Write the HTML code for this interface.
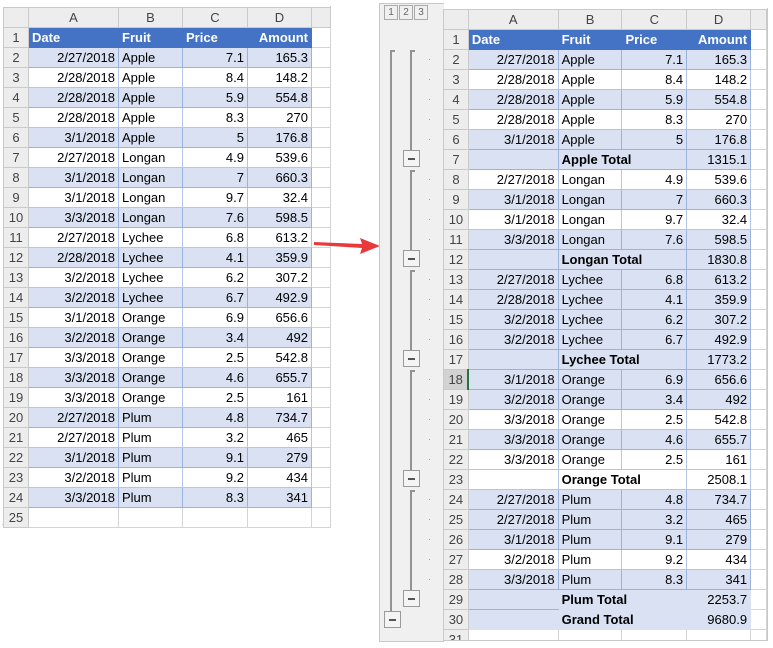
<!DOCTYPE html>
<html><head><meta charset="utf-8">
<style>
body{margin:0;width:773px;height:648px;background:#fff;position:relative;overflow:hidden;font-family:"Liberation Sans",sans-serif;font-size:13px;color:#000}
table{border-collapse:collapse;table-layout:fixed;position:absolute}
td{height:19px;padding:0 3px;border:1px solid #d4d4d4;white-space:nowrap;overflow:hidden;line-height:19px}
td.h{background:#ededed;color:#444;text-align:center;border-color:#cacaca;padding:0}
tr.t1 td:not(.h):not(.x){background:#4472c4;color:#fff;font-weight:bold;border-color:#4472c4}
tr.b td:not(.h):not(.x){background:#d9e1f2;border-color:#9bb2dd}
tr.w td:not(.h):not(.x){background:#fff;border-color:#b4c6e7}
td.r{text-align:right}
td.x{background:#fff}
.bold{font-weight:bold}
.o{position:absolute;background:#939393}
.mb{position:absolute;width:17px;height:17px;border:1px solid #9a9a9a;background:#f4f4f4;box-sizing:border-box}
.mb:after{content:"";position:absolute;left:4px;top:7px;width:7px;height:2px;background:#555}
.dot{position:absolute;width:1px;height:1px;background:#999}
</style></head><body>

<div style="position:absolute;left:2px;top:6px;width:328px;height:518px;border:1px solid #c8c8c8;border-top:none;border-left:none"></div>
<table style="left:3px;top:7px">
<colgroup><col style="width:25px"><col style="width:90px"><col style="width:64px"><col style="width:65px"><col style="width:64px"><col style="width:19px"></colgroup>
<tr class="hd"><td class="h"></td><td class="h">A</td><td class="h">B</td><td class="h">C</td><td class="h">D</td><td class="h"></td></tr>
<tr class="t1"><td class="h">1</td><td>Date</td><td>Fruit</td><td>Price</td><td class="r">Amount</td><td class="x"></td></tr>
<tr class="b"><td class="h">2</td><td class="r">2/27/2018</td><td>Apple</td><td class="r">7.1</td><td class="r">165.3</td><td class="x"></td></tr>
<tr class="w"><td class="h">3</td><td class="r">2/28/2018</td><td>Apple</td><td class="r">8.4</td><td class="r">148.2</td><td class="x"></td></tr>
<tr class="b"><td class="h">4</td><td class="r">2/28/2018</td><td>Apple</td><td class="r">5.9</td><td class="r">554.8</td><td class="x"></td></tr>
<tr class="w"><td class="h">5</td><td class="r">2/28/2018</td><td>Apple</td><td class="r">8.3</td><td class="r">270</td><td class="x"></td></tr>
<tr class="b"><td class="h">6</td><td class="r">3/1/2018</td><td>Apple</td><td class="r">5</td><td class="r">176.8</td><td class="x"></td></tr>
<tr class="w"><td class="h">7</td><td class="r">2/27/2018</td><td>Longan</td><td class="r">4.9</td><td class="r">539.6</td><td class="x"></td></tr>
<tr class="b"><td class="h">8</td><td class="r">3/1/2018</td><td>Longan</td><td class="r">7</td><td class="r">660.3</td><td class="x"></td></tr>
<tr class="w"><td class="h">9</td><td class="r">3/1/2018</td><td>Longan</td><td class="r">9.7</td><td class="r">32.4</td><td class="x"></td></tr>
<tr class="b"><td class="h">10</td><td class="r">3/3/2018</td><td>Longan</td><td class="r">7.6</td><td class="r">598.5</td><td class="x"></td></tr>
<tr class="w"><td class="h">11</td><td class="r">2/27/2018</td><td>Lychee</td><td class="r">6.8</td><td class="r">613.2</td><td class="x"></td></tr>
<tr class="b"><td class="h">12</td><td class="r">2/28/2018</td><td>Lychee</td><td class="r">4.1</td><td class="r">359.9</td><td class="x"></td></tr>
<tr class="w"><td class="h">13</td><td class="r">3/2/2018</td><td>Lychee</td><td class="r">6.2</td><td class="r">307.2</td><td class="x"></td></tr>
<tr class="b"><td class="h">14</td><td class="r">3/2/2018</td><td>Lychee</td><td class="r">6.7</td><td class="r">492.9</td><td class="x"></td></tr>
<tr class="w"><td class="h">15</td><td class="r">3/1/2018</td><td>Orange</td><td class="r">6.9</td><td class="r">656.6</td><td class="x"></td></tr>
<tr class="b"><td class="h">16</td><td class="r">3/2/2018</td><td>Orange</td><td class="r">3.4</td><td class="r">492</td><td class="x"></td></tr>
<tr class="w"><td class="h">17</td><td class="r">3/3/2018</td><td>Orange</td><td class="r">2.5</td><td class="r">542.8</td><td class="x"></td></tr>
<tr class="b"><td class="h">18</td><td class="r">3/3/2018</td><td>Orange</td><td class="r">4.6</td><td class="r">655.7</td><td class="x"></td></tr>
<tr class="w"><td class="h">19</td><td class="r">3/3/2018</td><td>Orange</td><td class="r">2.5</td><td class="r">161</td><td class="x"></td></tr>
<tr class="b"><td class="h">20</td><td class="r">2/27/2018</td><td>Plum</td><td class="r">4.8</td><td class="r">734.7</td><td class="x"></td></tr>
<tr class="w"><td class="h">21</td><td class="r">2/27/2018</td><td>Plum</td><td class="r">3.2</td><td class="r">465</td><td class="x"></td></tr>
<tr class="b"><td class="h">22</td><td class="r">3/1/2018</td><td>Plum</td><td class="r">9.1</td><td class="r">279</td><td class="x"></td></tr>
<tr class="w"><td class="h">23</td><td class="r">3/2/2018</td><td>Plum</td><td class="r">9.2</td><td class="r">434</td><td class="x"></td></tr>
<tr class="b"><td class="h">24</td><td class="r">3/3/2018</td><td>Plum</td><td class="r">8.3</td><td class="r">341</td><td class="x"></td></tr>
<tr><td class="h" style="height:15px;line-height:15px">25</td><td class="x" style="height:15px"></td><td class="x"></td><td class="x"></td><td class="x"></td><td class="x"></td></tr>
</table>

<svg style="position:absolute;left:312px;top:232px" width="70" height="26"><path d="M2 10 L50 12 L48 6 L68 14 L48 22 L50 16 L2 13Z" fill="#e83a3a"/></svg>

<div style="position:absolute;left:379px;top:3px;width:64px;height:637px;background:#f0f0f0;border:1px solid #c8c8c8;border-right:none"></div>
<div style="position:absolute;left:384px;top:5px;width:44px;height:15px;display:flex;font-size:10px;color:#666">
<div style="width:14px;border:1px solid #aaa;text-align:center;line-height:13px;margin-right:1px">1</div>
<div style="width:14px;border:1px solid #aaa;text-align:center;line-height:13px;margin-right:1px">2</div>
<div style="width:14px;border:1px solid #aaa;text-align:center;line-height:13px">3</div></div>

<div class="o" style="left:390px;top:50px;width:2px;height:561px"></div>
<div class="o" style="left:390px;top:50px;width:5px;height:2px"></div>
<div class="mb" style="left:384px;top:611px"></div>
<div class="o" style="left:410px;top:50px;width:2px;height:100px"></div><div class="o" style="left:410px;top:50px;width:5px;height:2px"></div><div class="mb" style="left:403px;top:150px"></div>
<div class="o" style="left:410px;top:170px;width:2px;height:80px"></div><div class="o" style="left:410px;top:170px;width:5px;height:2px"></div><div class="mb" style="left:403px;top:250px"></div>
<div class="o" style="left:410px;top:270px;width:2px;height:80px"></div><div class="o" style="left:410px;top:270px;width:5px;height:2px"></div><div class="mb" style="left:403px;top:350px"></div>
<div class="o" style="left:410px;top:370px;width:2px;height:100px"></div><div class="o" style="left:410px;top:370px;width:5px;height:2px"></div><div class="mb" style="left:403px;top:470px"></div>
<div class="o" style="left:410px;top:490px;width:2px;height:100px"></div><div class="o" style="left:410px;top:490px;width:5px;height:2px"></div><div class="mb" style="left:403px;top:590px"></div>
<div class="dot" style="left:429px;top:59px"></div><div class="dot" style="left:429px;top:79px"></div><div class="dot" style="left:429px;top:99px"></div><div class="dot" style="left:429px;top:119px"></div><div class="dot" style="left:429px;top:139px"></div>
<div class="dot" style="left:429px;top:179px"></div><div class="dot" style="left:429px;top:199px"></div><div class="dot" style="left:429px;top:219px"></div><div class="dot" style="left:429px;top:239px"></div>
<div class="dot" style="left:429px;top:279px"></div><div class="dot" style="left:429px;top:299px"></div><div class="dot" style="left:429px;top:319px"></div><div class="dot" style="left:429px;top:339px"></div>
<div class="dot" style="left:429px;top:379px"></div><div class="dot" style="left:429px;top:399px"></div><div class="dot" style="left:429px;top:419px"></div><div class="dot" style="left:429px;top:439px"></div><div class="dot" style="left:429px;top:459px"></div>
<div class="dot" style="left:429px;top:499px"></div><div class="dot" style="left:429px;top:519px"></div><div class="dot" style="left:429px;top:539px"></div><div class="dot" style="left:429px;top:559px"></div><div class="dot" style="left:429px;top:579px"></div>

<div style="position:absolute;left:443px;top:8px;width:324px;height:632px;border-right:1px solid #c8c8c8;border-bottom:1px solid #c8c8c8;overflow:hidden">
<table style="left:0;top:1px">
<colgroup><col style="width:25px"><col style="width:90px"><col style="width:64px"><col style="width:65px"><col style="width:64px"><col style="width:16px"></colgroup>
<tr class="hd"><td class="h"></td><td class="h">A</td><td class="h">B</td><td class="h">C</td><td class="h">D</td><td class="h"></td></tr>
<tr class="t1"><td class="h">1</td><td>Date</td><td>Fruit</td><td>Price</td><td class="r">Amount</td><td class="x"></td></tr>
<tr class="b"><td class="h">2</td><td class="r">2/27/2018</td><td>Apple</td><td class="r">7.1</td><td class="r">165.3</td><td class="x"></td></tr>
<tr class="w"><td class="h">3</td><td class="r">2/28/2018</td><td>Apple</td><td class="r">8.4</td><td class="r">148.2</td><td class="x"></td></tr>
<tr class="b"><td class="h">4</td><td class="r">2/28/2018</td><td>Apple</td><td class="r">5.9</td><td class="r">554.8</td><td class="x"></td></tr>
<tr class="w"><td class="h">5</td><td class="r">2/28/2018</td><td>Apple</td><td class="r">8.3</td><td class="r">270</td><td class="x"></td></tr>
<tr class="b"><td class="h">6</td><td class="r">3/1/2018</td><td>Apple</td><td class="r">5</td><td class="r">176.8</td><td class="x"></td></tr>
<tr class="b"><td class="h">7</td><td></td><td class="bold" colspan="2">Apple Total</td><td class="r">1315.1</td><td class="x"></td></tr>
<tr class="w"><td class="h">8</td><td class="r">2/27/2018</td><td>Longan</td><td class="r">4.9</td><td class="r">539.6</td><td class="x"></td></tr>
<tr class="b"><td class="h">9</td><td class="r">3/1/2018</td><td>Longan</td><td class="r">7</td><td class="r">660.3</td><td class="x"></td></tr>
<tr class="w"><td class="h">10</td><td class="r">3/1/2018</td><td>Longan</td><td class="r">9.7</td><td class="r">32.4</td><td class="x"></td></tr>
<tr class="b"><td class="h">11</td><td class="r">3/3/2018</td><td>Longan</td><td class="r">7.6</td><td class="r">598.5</td><td class="x"></td></tr>
<tr class="b"><td class="h">12</td><td></td><td class="bold" colspan="2">Longan Total</td><td class="r">1830.8</td><td class="x"></td></tr>
<tr class="b"><td class="h">13</td><td class="r">2/27/2018</td><td>Lychee</td><td class="r">6.8</td><td class="r">613.2</td><td class="x"></td></tr>
<tr class="b"><td class="h">14</td><td class="r">2/28/2018</td><td>Lychee</td><td class="r">4.1</td><td class="r">359.9</td><td class="x"></td></tr>
<tr class="b"><td class="h">15</td><td class="r">3/2/2018</td><td>Lychee</td><td class="r">6.2</td><td class="r">307.2</td><td class="x"></td></tr>
<tr class="b"><td class="h">16</td><td class="r">3/2/2018</td><td>Lychee</td><td class="r">6.7</td><td class="r">492.9</td><td class="x"></td></tr>
<tr class="b"><td class="h">17</td><td></td><td class="bold" colspan="2">Lychee Total</td><td class="r">1773.2</td><td class="x"></td></tr>
<tr class="b"><td class="h" style="background:#d2d2d2;border-right:2px solid #217346">18</td><td class="r">3/1/2018</td><td>Orange</td><td class="r">6.9</td><td class="r">656.6</td><td class="x"></td></tr>
<tr class="b"><td class="h">19</td><td class="r">3/2/2018</td><td>Orange</td><td class="r">3.4</td><td class="r">492</td><td class="x"></td></tr>
<tr class="w"><td class="h">20</td><td class="r">3/3/2018</td><td>Orange</td><td class="r">2.5</td><td class="r">542.8</td><td class="x"></td></tr>
<tr class="b"><td class="h">21</td><td class="r">3/3/2018</td><td>Orange</td><td class="r">4.6</td><td class="r">655.7</td><td class="x"></td></tr>
<tr class="w"><td class="h">22</td><td class="r">3/3/2018</td><td>Orange</td><td class="r">2.5</td><td class="r">161</td><td class="x"></td></tr>
<tr class="w"><td class="h">23</td><td></td><td class="bold" colspan="2">Orange Total</td><td class="r">2508.1</td><td class="x"></td></tr>
<tr class="b"><td class="h">24</td><td class="r">2/27/2018</td><td>Plum</td><td class="r">4.8</td><td class="r">734.7</td><td class="x"></td></tr>
<tr class="b"><td class="h">25</td><td class="r">2/27/2018</td><td>Plum</td><td class="r">3.2</td><td class="r">465</td><td class="x"></td></tr>
<tr class="b"><td class="h">26</td><td class="r">3/1/2018</td><td>Plum</td><td class="r">9.1</td><td class="r">279</td><td class="x"></td></tr>
<tr class="w"><td class="h">27</td><td class="r">3/2/2018</td><td>Plum</td><td class="r">9.2</td><td class="r">434</td><td class="x"></td></tr>
<tr class="b"><td class="h">28</td><td class="r">3/3/2018</td><td>Plum</td><td class="r">8.3</td><td class="r">341</td><td class="x"></td></tr>
<tr class="b"><td class="h">29</td><td style="border-right-color:#d9e1f2"></td><td class="bold" colspan="2" style="border-color:#d9e1f2">Plum Total</td><td class="r" style="border-color:#d9e1f2">2253.7</td><td class="x"></td></tr>
<tr class="b"><td class="h">30</td><td style="border-color:#d9e1f2"></td><td class="bold" colspan="2" style="border-color:#d9e1f2">Grand Total</td><td class="r" style="border-color:#d9e1f2">9680.9</td><td class="x"></td></tr>
<tr><td class="h">31</td><td class="x"></td><td class="x"></td><td class="x"></td><td class="x"></td><td class="x"></td></tr>
</table>
</div>
</body></html>
